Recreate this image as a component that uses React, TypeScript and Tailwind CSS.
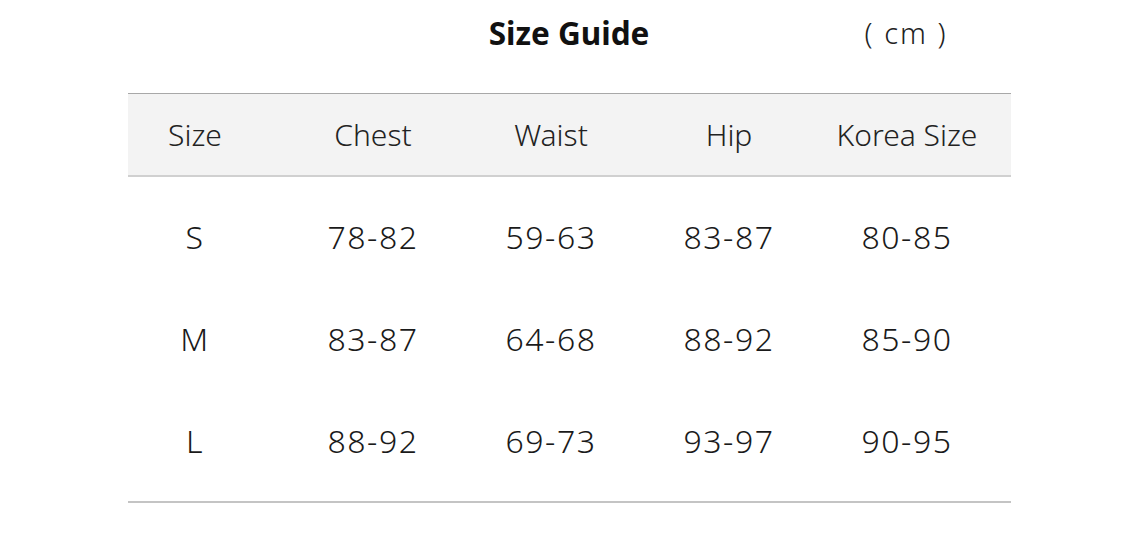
const headers = ['Size', 'Chest', 'Waist', 'Hip', 'Korea Size']

const rows = [
  ['S', '78-82', '59-63', '83-87', '80-85'],
  ['M', '83-87', '64-68', '88-92', '85-90'],
  ['L', '88-92', '69-73', '93-97', '90-95'],
]

export default function App() {
  return (
    <div className="w-[1125px] h-[538px] bg-white text-[#1a1a1a]" style={{ fontFamily: '"Noto Sans", "Noto Sans CJK KR", sans-serif' }}>
      {/* Title */}
      <div className="flex h-[66px] items-center">
        <div className="ml-[409px] w-[320px] text-center text-[31.5px] font-bold text-[#111]">Size Guide</div>
        <div className="ml-[88px] w-[178px] text-center text-[29px] font-light tracking-[2px] text-[#222]">( cm )</div>
      </div>

      {/* Table */}
      <div className="mt-[27px] ml-[128px] w-[883px]">
        <div className="border-t border-[#a8a8a8] border-b-2 border-b-[#d0d0d0] bg-[#f3f3f3]">
          <div className="grid grid-cols-5 w-[890px] -ml-[22px] h-[81px] items-center text-center text-[30px] font-light text-[#222]">
            {headers.map(h => (
              <div key={h}>{h}</div>
            ))}
          </div>
        </div>
        <div className="pt-[9px] pb-[9px] border-b-2 border-[#c4c4c4]">
          {rows.map(r => (
            <div key={r[0]} className="grid grid-cols-5 w-[890px] -ml-[22px] h-[102px] items-center text-center text-[32px] font-light tracking-[1.5px]">
              {r.map((c, i) => (
                <div key={i}>{c}</div>
              ))}
            </div>
          ))}
        </div>
      </div>
    </div>
  )
}
